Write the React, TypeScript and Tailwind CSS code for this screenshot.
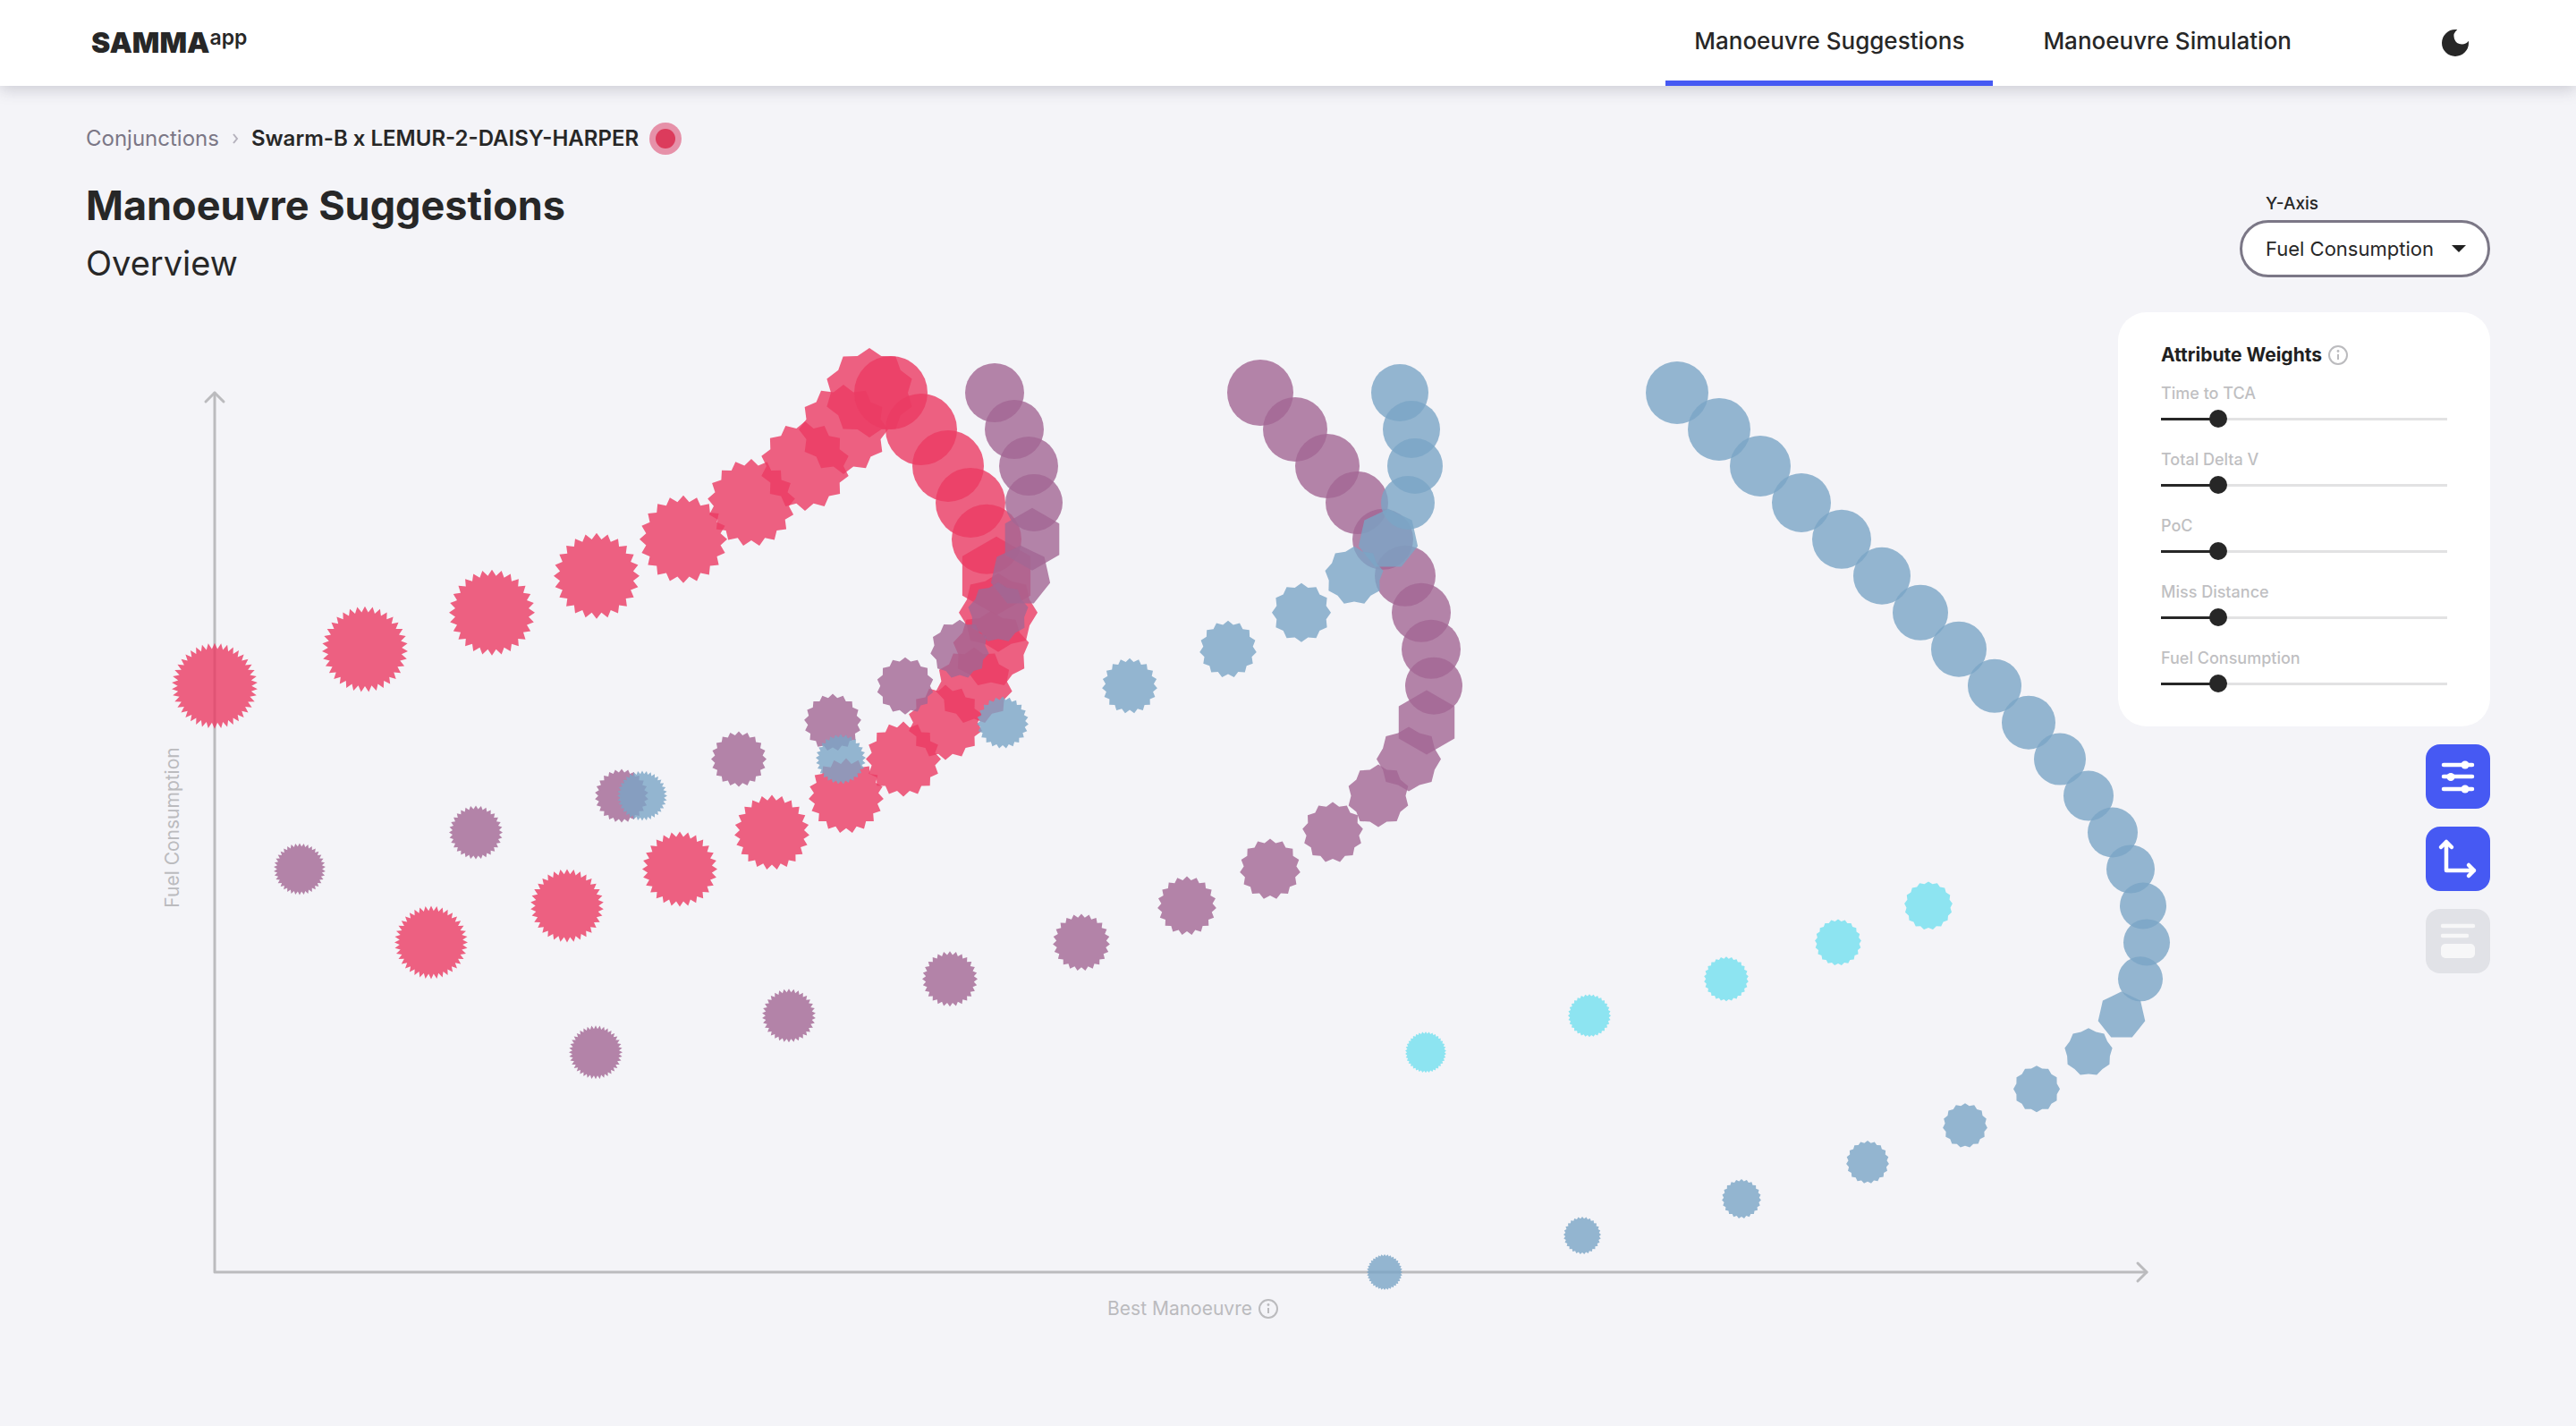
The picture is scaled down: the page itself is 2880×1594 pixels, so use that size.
import { useState } from "react";

/** [column x, row index, outer radius, spike count]; a spike count of 0 is a plain disc */
type Mark = [number, number, number, number];

type Series = { name: string; fill: string; depth: number; marks: Mark[] };

const SERIES: Series[] = [
  {
    name: "red-upper",
    fill: "#eb3b63",
    depth: 0.86,
    marks: [
      [240, 8, 48, 42], [408, 7, 48, 35], [550, 6, 48, 28], [667, 5, 48, 24],
      [764, 4, 49, 20], [840, 3, 49, 17], [900, 2, 50, 14], [943, 1, 50, 12], [972, 0, 50, 10],
    ],
  },
  {
    name: "red-lower",
    fill: "#eb3b63",
    depth: 0.86,
    marks: [
      [996, 0, 41, 0], [1030, 1, 40, 0], [1060, 2, 40, 0], [1085, 3, 39, 0], [1103, 4, 39, 0],
      [1114, 5, 44, 6], [1116, 6, 44, 8], [1108, 7, 43, 9], [1089, 8, 43, 11], [1057, 9, 42, 14],
      [1010, 10, 42, 16], [946, 11, 42, 19], [863, 12, 42, 23], [760, 13, 42, 28], [634, 14, 41, 34], [482, 15, 41, 40],
    ],
  },
  {
    name: "purple-left",
    fill: "#a26793",
    depth: 0.87,
    marks: [
      [1112, 0, 33, 0], [1134, 1, 33, 0], [1150, 2, 33, 0], [1156, 3, 32, 0], [1154, 4, 35, 6],
      [1141, 5, 34, 7], [1116, 6, 34, 9], [1073, 7, 33, 11], [1012, 8, 32, 14], [931, 9, 32, 17],
      [826, 10, 31, 20], [695, 11, 30, 26], [532, 12, 30, 32], [335, 13, 29, 38],
    ],
  },
  {
    name: "purple-right",
    fill: "#a26793",
    depth: 0.87,
    marks: [
      [1409, 0, 37, 0], [1448, 1, 36, 0], [1484, 2, 36, 0], [1517, 3, 35, 0], [1546, 4, 34, 0],
      [1571, 5, 34, 0], [1589, 6, 33, 0], [1600, 7, 33, 0], [1603, 8, 32, 0], [1595, 9, 36, 6],
      [1575, 10, 36, 8], [1541, 11, 35, 10], [1490, 12, 34, 13], [1420, 13, 34, 15], [1327, 14, 33, 19],
      [1209, 15, 32, 23], [1062, 16, 31, 28], [882, 17, 30, 34], [666, 18, 30, 40],
    ],
  },
  {
    name: "blue-left",
    fill: "#7ba5c6",
    depth: 0.87,
    marks: [
      [1565, 0, 32, 0], [1578, 1, 32, 0], [1582, 2, 31, 0], [1574, 3, 30, 0], [1552, 4, 34, 7],
      [1514, 5, 33, 9], [1455, 6, 33, 12], [1373, 7, 32, 15], [1263, 8, 31, 19], [1121, 9, 29, 23],
      [940, 10, 28, 29], [718, 11, 28, 36],
    ],
  },
  {
    name: "blue-right",
    fill: "#7ba5c6",
    depth: 0.9,
    marks: [
      [1875, 0, 35, 0], [1922, 1, 35, 0], [1968, 2, 34, 0], [2014, 3, 33, 0], [2059, 4, 33, 0],
      [2104, 5, 32, 0], [2147, 6, 31, 0], [2190, 7, 31, 0], [2230, 8, 30, 0], [2268, 9, 30, 0],
      [2303, 10, 29, 0], [2335, 11, 28, 0], [2362, 12, 28, 0], [2382, 13, 27, 0], [2396, 14, 26, 0],
      [2400, 15, 26, 0], [2393, 16, 25, 0], [2372, 17, 27, 7], [2335, 18, 27, 9], [2277, 19, 26, 12],
      [2197, 20, 25, 15], [2088, 21, 24, 19], [1947, 22, 22, 23], [1769, 23, 21, 29], [1548, 24, 20, 36],
    ],
  },
  {
    name: "cyan",
    fill: "#73e0ef",
    depth: 0.91,
    marks: [
      [2156, 14, 27, 17], [2055, 15, 26, 21], [1930, 16, 25, 26], [1777, 17, 24, 32], [1594, 18, 23, 38],
    ],
  },
];

const TOP = 439;
const BOTTOM = 1422;
const rowY = (row: number) => TOP + ((BOTTOM - TOP) / 24) * row;

function spikes(cx: number, cy: number, r: number, n: number, depth: number) {
  // Hexagons and heptagons stay flat-sided: their inner radius is the middle of the edge.
  const inner = n <= 7 ? r * Math.cos(Math.PI / n) : r * depth;
  return Array.from({ length: n * 2 }, (_, i) => {
    const a = (Math.PI * i) / n;
    const d = i % 2 === 0 ? r : inner;
    return `${(cx + d * Math.sin(a)).toFixed(1)},${(cy - d * Math.cos(a)).toFixed(1)}`;
  }).join(" ");
}

function Plot() {
  return (
    <svg viewBox="96 349 2688 1096" className="block w-full" role="img" aria-label="Manoeuvre suggestions plot">
      <g fill="none" stroke="#bbbbbe" strokeWidth="3" strokeLinecap="round" strokeLinejoin="round">
        <path d="M240 439V1422H2400" />
        <path d="M230 449L240 439L250 449" />
        <path d="M2390 1412L2400 1422L2390 1432" />
      </g>
      {SERIES.map((s) => (
        <g key={s.name} fill={s.fill} fillOpacity="0.8">
          {s.marks.map(([x, row, r, n]) =>
            n === 0 ? (
              <circle key={row} cx={x} cy={rowY(row)} r={r} />
            ) : (
              <polygon key={row} points={spikes(x, rowY(row), r, n, s.depth)} />
            ),
          )}
        </g>
      ))}
      <text
        transform="translate(200 925) rotate(-90)"
        textAnchor="middle"
        className="fill-[#bbbbbe] text-[21px]"
      >
        Fuel Consumption
      </text>
    </svg>
  );
}

function InfoIcon() {
  return (
    <svg viewBox="0 0 24 24" className="size-6 shrink-0" fill="none" stroke="#bbbbbe" strokeWidth="2" aria-hidden="true">
      <circle cx="12" cy="12" r="10" />
      <path d="M12 11v6" />
      <circle cx="12" cy="7.5" r="1.4" fill="#bbbbbe" stroke="none" />
    </svg>
  );
}

const WEIGHTS = ["Time to TCA", "Total Delta V", "PoC", "Miss Distance", "Fuel Consumption"];

function WeightSlider({ label }: { label: string }) {
  const [value, setValue] = useState(20);
  const id = label.toLowerCase().replaceAll(" ", "-");
  return (
    <div className="flex flex-col">
      <label htmlFor={id} className="text-[18px] leading-6 font-medium text-[#bfbfc2]">
        {label}
      </label>
      <input
        id={id}
        type="range"
        min={0}
        max={100}
        value={value}
        onChange={(e) => setValue(Number(e.target.value))}
        style={{ backgroundImage: `linear-gradient(to right, #272727 ${value}%, #e2e2e3 ${value}%)` }}
        className="-mx-[10px] mt-1 h-6 w-[calc(100%+20px)] appearance-none bg-transparent bg-[length:calc(100%-20px)_3px] bg-center bg-no-repeat [&::-webkit-slider-thumb]:size-5 [&::-webkit-slider-thumb]:appearance-none [&::-webkit-slider-thumb]:rounded-full [&::-webkit-slider-thumb]:bg-[#272727]"
      />
    </div>
  );
}

function Sidebar() {
  return (
    <aside className="col-start-1 row-start-1 flex flex-col items-end gap-5 justify-self-end">
      <section className="flex w-[416px] flex-col rounded-[32px] bg-white px-12 pt-8 pb-9">
        <h3 className="flex items-center gap-1.5 text-[21px] leading-8 font-bold text-[#202020]">
          Attribute Weights <InfoIcon />
        </h3>
        <div className="mt-[15px] flex flex-col gap-[22px]">
          {WEIGHTS.map((w) => (
            <WeightSlider key={w} label={w} />
          ))}
        </div>
      </section>
      <button type="button" aria-label="Attribute weights" className="size-[72px] rounded-2xl bg-[#4659f3]">
        <svg viewBox="0 0 72 72" fill="#fff" stroke="#fff" strokeWidth="4.5" strokeLinecap="round">
          <path d="M20 23H52M20 36H52M20 50H52" />
          <g stroke="none">
            <circle cx="44" cy="23" r="4.5" />
            <circle cx="28" cy="36.5" r="4.5" />
            <circle cx="44" cy="50" r="4.5" />
          </g>
        </svg>
      </button>
      <button type="button" aria-label="Show axes" className="size-[72px] rounded-2xl bg-[#4659f3]">
        <svg viewBox="0 0 72 72" fill="none" stroke="#fff" strokeWidth="4.5" strokeLinecap="round" strokeLinejoin="round">
          <path d="M23 17V49H54M17 23L23 17L29 23M48 43L54 49L48 55" />
        </svg>
      </button>
      <button type="button" aria-label="Show details" className="size-[72px] rounded-2xl bg-[#e1e2e7]">
        <svg viewBox="0 0 72 72" fill="#f7f7f8" stroke="#f7f7f8" strokeWidth="4.5" strokeLinecap="round">
          <path d="M19 19H53M19 30H46" />
          <rect x="17" y="39" width="38" height="16" rx="5" stroke="none" />
        </svg>
      </button>
    </aside>
  );
}

function Header() {
  return (
    <header className="flex h-24 items-stretch justify-between bg-white pr-[120px] pl-[102px] shadow-[0_4px_16px_rgba(60,60,80,0.22)]">
      <a href="#home" className="flex items-center text-[32px] leading-none font-black">
        SAMMA<span className="mb-3 text-[23px] leading-none font-semibold">app</span>
      </a>
      <div className="flex items-stretch">
        <nav className="flex items-stretch gap-6 text-[26px] font-medium">
          <a href="#suggestions" aria-current="page" className="flex items-center border-b-[6px] border-[#4659f3] px-8">
            Manoeuvre Suggestions
          </a>
          <a href="#simulation" className="flex items-center border-b-[6px] border-transparent px-8">
            Manoeuvre Simulation
          </a>
        </nav>
        <button type="button" aria-label="Toggle dark mode" className="ml-[136px] flex items-center">
          <svg viewBox="3 3 18 18" className="size-[30px]" fill="#272727" aria-hidden="true">
            <path d="M12 3a9 9 0 1 0 9 9c0-.46-.04-.92-.1-1.36a5.389 5.389 0 0 1-4.4 2.26 5.403 5.403 0 0 1-3.14-9.8c-.44-.06-.9-.1-1.36-.1z" />
          </svg>
        </button>
      </div>
    </header>
  );
}

export default function App() {
  return (
    <div className="min-h-screen bg-[#f4f4f8] font-['Inter',sans-serif] text-[#272727]">
      <Header />
      <main className="px-24 pt-9 pb-12">
        <nav aria-label="Breadcrumb" className="flex items-center text-[24px] leading-[46px]">
          <a href="#conjunctions" className="text-[#7b7786]">Conjunctions</a>
          <svg viewBox="0 0 36 36" className="size-9" fill="none" stroke="#b5b2bd" strokeWidth="2" aria-hidden="true">
            <path d="M16 13L20 18L16 23" />
          </svg>
          <span className="font-semibold">Swarm-B x LEMUR-2-DAISY-HARPER</span>
          <span className="ml-3 flex size-9 items-center justify-center rounded-full bg-[#e691a9]">
            <span className="size-[22px] rounded-full bg-[#dc3b5c]" />
          </span>
        </nav>
        <div className="flex items-end justify-between">
          <div className="mt-6">
            <h1 className="text-[45px] leading-[56px] font-bold">Manoeuvre Suggestions</h1>
            <h2 className="mt-2 text-[38px] leading-[56px]">Overview</h2>
          </div>
          <div className="mb-3 flex w-[280px] flex-col">
            <label htmlFor="y-axis" className="mb-1 pl-[29px] text-[19px] leading-7 font-medium">Y-Axis</label>
            <div className="grid items-center">
              <select
                id="y-axis"
                className="col-start-1 row-start-1 h-16 w-full appearance-none rounded-full border-3 border-[#7b7786] bg-white pr-14 pl-[26px] text-[22px]"
              >
                <option>Fuel Consumption</option>
                <option>Total Delta V</option>
                <option>Miss Distance</option>
              </select>
              <svg viewBox="0 0 16 8" className="pointer-events-none col-start-1 row-start-1 mr-[27px] h-2 w-4 justify-self-end" fill="#202020" aria-hidden="true">
                <path d="M0 0H16L8 8Z" />
              </svg>
            </div>
          </div>
        </div>
        <div className="mt-[27px] grid">
          <figure className="col-start-1 row-start-1">
            <Plot />
            <figcaption className="flex items-center justify-center gap-1.5 pr-[212px] text-[21px] leading-9 text-[#bbbbbe]">
              Best Manoeuvre <InfoIcon />
            </figcaption>
          </figure>
          <Sidebar />
        </div>
      </main>
    </div>
  );
}
